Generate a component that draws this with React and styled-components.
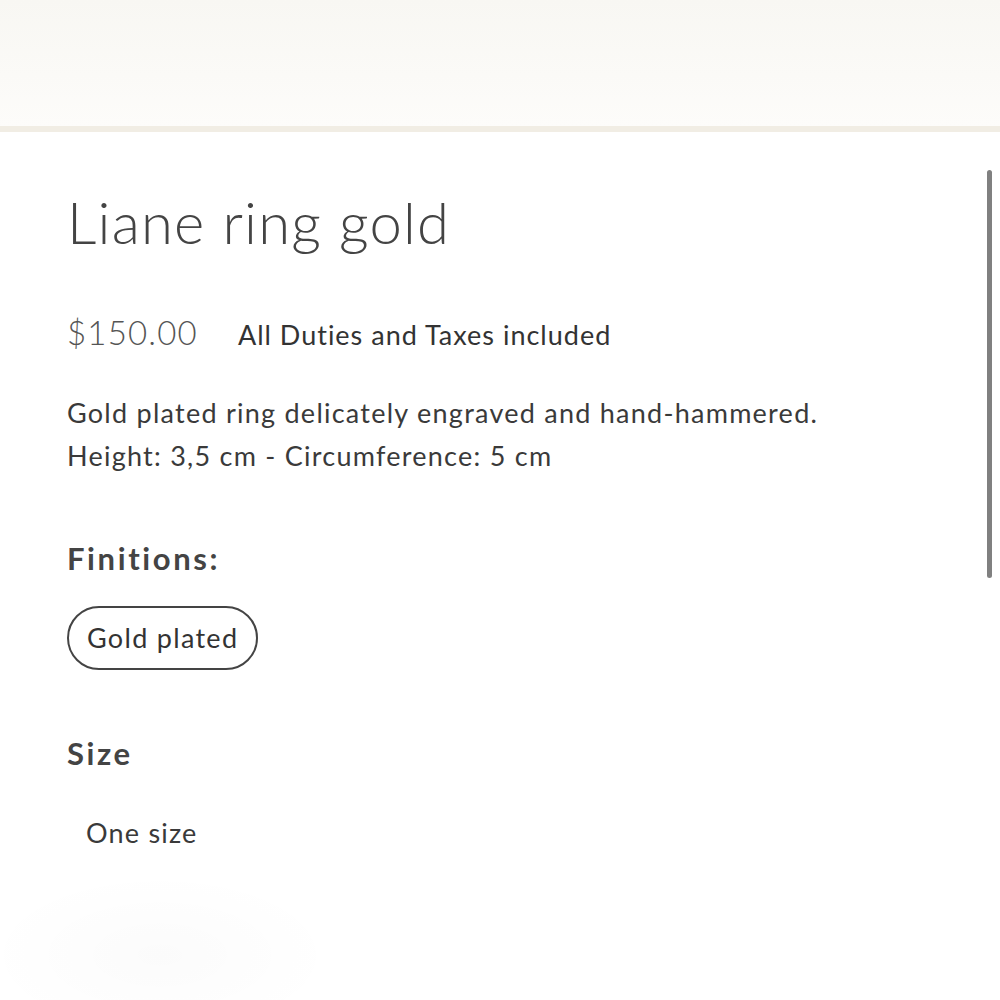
import styled, { createGlobalStyle } from "styled-components";

const GlobalStyle = createGlobalStyle`
  html, body {
    margin: 0;
    padding: 0;
    background: #ffffff;
  }
  body {
    font-family: Lato, "Noto Sans", sans-serif;
    color: #3a3a3a;
  }
`;

const Page = styled.div`
  position: relative;
  width: 1000px;
  height: 1000px;
  overflow: hidden;
  background: #ffffff;
`;

const TopBar = styled.div`
  height: 126px;
  background: linear-gradient(180deg, #f8f7f3 0%, #fbfaf7 60%, #fdfcfa 100%);
  border-bottom: 6px solid #f1ede4;
`;

const Details = styled.section`
  display: flex;
  flex-direction: column;
  padding: 0 0 0 67px;
`;

const Title = styled.h1`
  margin: 55px 0 0;
  font-size: 58px;
  font-weight: 300;
  letter-spacing: 1.2px;
  color: #444444;
  line-height: 1.2;
`;

const PriceRow = styled.div`
  display: flex;
  align-items: baseline;
  gap: 40px;
  margin-top: 55px;
`;

const Price = styled.span`
  font-size: 33px;
  font-weight: 300;
  letter-spacing: 1.2px;
  color: #555555;
`;

const TaxNote = styled.span`
  font-size: 27px;
  letter-spacing: 1px;
  color: #333333;
`;

const Description = styled.p`
  margin: 39px 0 0;
  font-size: 27px;
  line-height: 43px;
  letter-spacing: 1.25px;
  color: #3a3a3a;
`;

const OptionLabel = styled.h3`
  margin: ${(p) => p.$top}px 0 0;
  font-size: 31px;
  font-weight: 700;
  letter-spacing: 2.6px;
  color: #444444;
`;

const Pill = styled.button`
  align-self: flex-start;
  margin-top: 29px;
  height: 64px;
  padding: 0 18px;
  border: 2px solid #444444;
  border-radius: 32px;
  background: #ffffff;
  font-family: inherit;
  font-size: 27px;
  letter-spacing: 1.3px;
  color: #333333;
`;

const SizeValue = styled.div`
  margin: 44px 0 0 19px;
  font-size: 27px;
  letter-spacing: 1.2px;
  color: #3a3a3a;
`;

const ScrollThumb = styled.div`
  position: absolute;
  top: 170px;
  right: 8px;
  width: 5px;
  height: 408px;
  border-radius: 3px;
  background: #808080;
`;

const Fade = styled.div`
  position: absolute;
  left: -20px;
  bottom: -40px;
  width: 360px;
  height: 170px;
  border-radius: 50%;
  background: radial-gradient(ellipse at center, rgba(0, 0, 0, 0.014), rgba(0, 0, 0, 0) 70%);
`;

export default function App() {
  return (
    <>
      <GlobalStyle />
      <Page>
        <TopBar />
        <Details>
          <Title>Liane ring gold</Title>
          <PriceRow>
            <Price>$150.00</Price>
            <TaxNote>All Duties and Taxes included</TaxNote>
          </PriceRow>
          <Description>
            Gold plated ring delicately engraved and hand-hammered.
            <br />
            Height: 3,5 cm - Circumference: 5 cm
          </Description>
          <OptionLabel $top={62}>Finitions:</OptionLabel>
          <Pill>Gold plated</Pill>
          <OptionLabel $top={64}>Size</OptionLabel>
          <SizeValue>One size</SizeValue>
        </Details>
        <Fade />
        <ScrollThumb />
      </Page>
    </>
  );
}
